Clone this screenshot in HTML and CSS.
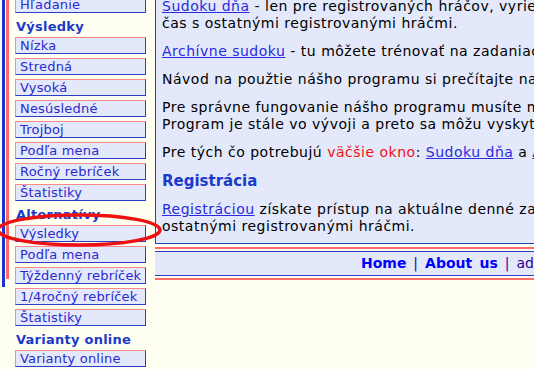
FILE: index.html
```html
<!DOCTYPE html>
<html lang="sk">
<head>
    <meta charset="UTF-8">
    <title>Sudoku</title>
    <link rel="stylesheet" href="styles.css">
</head>
<body>
    <div class="page">
        <div class="rail rail-blue"></div>
        <div class="rail rail-red"></div>

        <nav class="menu">
            <a href="#" class="item">Hľadanie</a>
            <div class="menu-head">Výsledky</div>
            <a href="#" class="item">Nízka</a>
            <a href="#" class="item">Stredná</a>
            <a href="#" class="item">Vysoká</a>
            <a href="#" class="item">Nesúsledné</a>
            <a href="#" class="item">Trojboj</a>
            <a href="#" class="item">Podľa mena</a>
            <a href="#" class="item">Ročný rebríček</a>
            <a href="#" class="item">Štatistiky</a>
            <div class="menu-head">Alternatívy</div>
            <a href="#" class="item">Výsledky</a>
            <a href="#" class="item">Podľa mena</a>
            <a href="#" class="item">Týždenný rebríček</a>
            <a href="#" class="item">1/4ročný rebríček</a>
            <a href="#" class="item">Štatistiky</a>
            <div class="menu-head">Varianty online</div>
            <a href="#" class="item">Varianty online</a>
        </nav>

        <div class="main">
            <div class="content">
                <p><a href="#">Sudoku dňa</a> - len pre registrovaných hráčov, vyriešte si denné sudoku a porovnajte svoj<br>čas s ostatnými registrovanými hráčmi.</p>
                <p><a href="#">Archívne sudoku</a> - tu môžete trénovať na zadaniach z minulých dní.</p>
                <p>Návod na použtie nášho programu si prečítajte na stránke Pomoc.</p>
                <p>Pre správne fungovanie nášho programu musíte mať zapnutý JavaScript.<br>Program je stále vo vývoji a preto sa môžu vyskytnúť chyby.</p>
                <p>Pre tých čo potrebujú <span class="hot">väčšie okno</span>: <a href="#">Sudoku dňa</a> a <a href="#">Archívne sudoku</a>.</p>
                <h2>Registrácia</h2>
                <p><a href="#">Registráciou</a> získate prístup na aktuálne denné zadania a môžete porovnať svoj čas s<br>ostatnými registrovanými hráčmi.</p>
            </div>
            <div class="footer">
                <div class="footer-bar">
                    <a href="#">Home</a> | <a href="#">About us</a> | admin
                </div>
            </div>
        </div>
    </div>

    <!-- red marker drawn over the menu -->
    <svg class="mark" width="534" height="369" viewBox="0 0 534 369">
        <ellipse cx="79" cy="230" rx="81" ry="15" fill="none" stroke="#ec1010" stroke-width="3.5"/>
    </svg>
</body>
</html>
```

FILE: styles.css
```css
html, body {
    margin: 0;
    padding: 0;
}

body {
    background-color: #fffff1;
    font-family: "DejaVu Sans", Verdana, sans-serif;
    color: #000;
    overflow: hidden;
    position: relative;
    width: 534px;
    height: 369px;
}

.page {
    display: flex;
    align-items: flex-start;
    margin-top: -4px;
    padding-left: 2px;
}

/* left frame lines */
.rail {
    width: 3px;
    flex: none;
}

.rail-blue {
    background-color: #1a35d0;
    height: 291px;
}

.rail-red {
    background-color: #ff6a6a;
    height: 283px;
    margin-left: 1px;
}

/* Menu */
.menu {
    width: 131px;
    margin-left: 6px;
    flex: none;
    display: flex;
    flex-direction: column;
}

.item {
    display: block;
    height: 17px;
    box-sizing: border-box;
    border: 1px solid;
    border-color: #ff8a8a #2a3ec8 #2a3ec8 #ff8a8a;
    background-color: #e3e9fb;
    color: #2a2ad0;
    font-size: 13px;
    letter-spacing: 0.2px;
    line-height: 15px;
    padding-left: 4px;
    margin-bottom: 4px;
    text-decoration: none;
    white-space: nowrap;
    overflow: hidden;
}

.menu-head {
    height: 20px;
    line-height: 20px;
    font-size: 13px;
    letter-spacing: 0.25px;
    font-weight: bold;
    color: #1a3acc;
    padding-left: 1px;
    white-space: nowrap;
}

/* Main column */
.main {
    width: 760px;
    margin-left: 9px;
    flex: none;
}

.content {
    border: 1px solid #2a3ec8;
    background-color: #e3e9fb;
    padding: 1px 6px 8px;
}

.content p {
    margin: 0 0 11px;
    font-size: 14px;
    letter-spacing: 0.5px;
    line-height: 17px;
    white-space: nowrap;
}

.content p:last-child {
    margin-bottom: 0;
}

.content a {
    color: #2a2ae0;
}

.content h2 {
    margin: 0 0 11px;
    font-size: 15px;
    line-height: 18px;
    color: #1a3acc;
}

.hot {
    color: #f01010;
}

/* Footer */
.footer {
    margin-top: 3px;
    border-top: 2px solid #ff6a6a;
    border-bottom: 2px solid #ff6a6a;
    padding: 2px 0;
}

.footer-bar {
    border-top: 1px solid #2a3ec8;
    border-bottom: 1px solid #2a3ec8;
    background-color: #e3e9fb;
    height: 23px;
    line-height: 23px;
    padding-left: 206px;
    font-size: 14px;
    word-spacing: 2.5px;
    color: #300090;
    white-space: nowrap;
}

.footer-bar a {
    color: #0000ff;
    font-weight: bold;
    text-decoration: none;
}

.mark {
    position: absolute;
    left: 0;
    top: 0;
    pointer-events: none;
}
```
